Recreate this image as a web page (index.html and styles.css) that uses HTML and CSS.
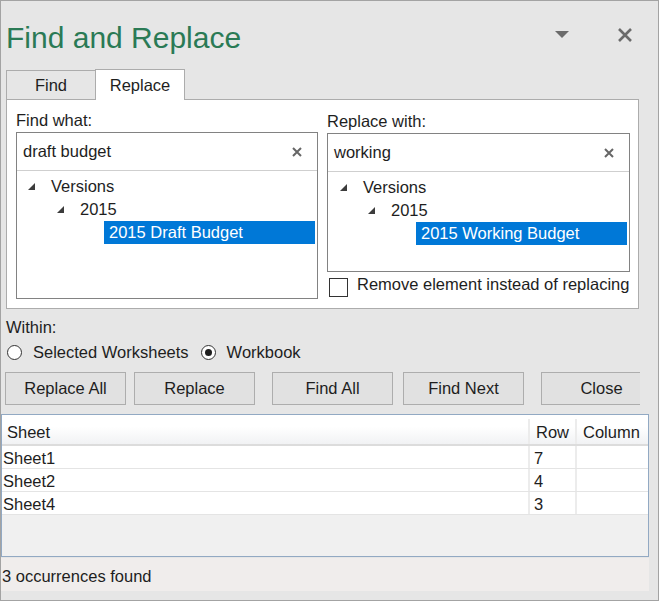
FILE: index.html
```html
<!DOCTYPE html>
<html lang="en">
<head>
  <meta charset="UTF-8">
  <title>Find and Replace</title>
  <link rel="stylesheet" href="styles.css">
</head>
<body>
  <div class="pane">
    <header class="titlebar">
      <h1 class="title">Find and Replace</h1>
      <div class="title-actions">
        <svg class="menu-arrow" width="14" height="8" viewBox="0 0 14 8"><polygon points="0,0 14,0 7,7" fill="#6b6b6b"/></svg>
        <svg class="close-x" width="16" height="16" viewBox="0 0 16 16"><path d="M2 2 L14 14 M14 2 L2 14" stroke="#6b6b6b" stroke-width="2.6"/></svg>
      </div>
    </header>

    <div class="tabs">
      <div class="tab">Find</div>
      <div class="tab active">Replace</div>
    </div>

    <section class="panel">
      <div class="col col-find">
        <div class="label">Find what:</div>
        <div class="box box-find">
          <div class="search">
            <span>draft budget</span>
            <svg class="clear" width="10" height="10" viewBox="0 0 10 10"><path d="M1 1 L9 9 M9 1 L1 9" stroke="#666" stroke-width="2"/></svg>
          </div>
          <div class="tree">
            <div class="node lvl1"><span class="twisty"></span>Versions</div>
            <div class="node lvl2"><span class="twisty"></span>2015</div>
            <div class="node lvl3 selected">2015 Draft Budget</div>
          </div>
        </div>
      </div>

      <div class="col col-replace">
        <div class="label">Replace with:</div>
        <div class="box box-replace">
          <div class="search">
            <span>working</span>
            <svg class="clear" width="10" height="10" viewBox="0 0 10 10"><path d="M1 1 L9 9 M9 1 L1 9" stroke="#666" stroke-width="2"/></svg>
          </div>
          <div class="tree">
            <div class="node lvl1"><span class="twisty"></span>Versions</div>
            <div class="node lvl2"><span class="twisty"></span>2015</div>
            <div class="node lvl3 selected">2015 Working Budget</div>
          </div>
        </div>
        <label class="check">
          <span class="checkbox"></span>
          <span>Remove element instead of replacing</span>
        </label>
      </div>
    </section>

    <div class="within">
      <div class="label">Within:</div>
      <div class="radios">
        <span class="radio"></span><span class="radio-text">Selected Worksheets</span>
        <span class="radio checked"></span><span class="radio-text">Workbook</span>
      </div>
    </div>

    <div class="buttons">
      <button class="btn btn-replace-all">Replace All</button>
      <button class="btn btn-replace">Replace</button>
      <button class="btn btn-find-all">Find All</button>
      <button class="btn btn-find-next">Find Next</button>
      <button class="btn btn-close">Close</button>
    </div>

    <div class="results">
      <div class="grid-row grid-head">
        <div class="cell c-sheet">Sheet</div>
        <div class="cell c-row">Row</div>
        <div class="cell c-col">Column</div>
      </div>
      <div class="grid-row">
        <div class="cell c-sheet">Sheet1</div>
        <div class="cell c-row">7</div>
        <div class="cell c-col"></div>
      </div>
      <div class="grid-row">
        <div class="cell c-sheet">Sheet2</div>
        <div class="cell c-row">4</div>
        <div class="cell c-col"></div>
      </div>
      <div class="grid-row">
        <div class="cell c-sheet">Sheet4</div>
        <div class="cell c-row">3</div>
        <div class="cell c-col"></div>
      </div>
    </div>

    <div class="status">3 occurrences found</div>
  </div>
</body>
</html>
```

FILE: styles.css
```css
body {
  margin: 0;
  padding: 0;
  font-family: "Liberation Sans", Arial, sans-serif;
  font-size: 16.5px;
  color: #1e1e1e;
  background-color: #fff;
}

.pane {
  box-sizing: border-box;
  width: 659px;
  height: 601px;
  border: 1px solid #a3a3a3;
  background-color: #e6e6e6; /* dialog grey */
  overflow: hidden;
}

/* title row */
.titlebar {
  display: flex;
  height: 68px;
}

.title {
  margin: 20px 0 0 5px;
  font-size: 30px;
  font-weight: normal;
  line-height: 34px;
  color: #2a7a55; /* excel green */
}

.title-actions {
  display: flex;
  align-items: center;
  height: 16px;
  margin: 26px 25px 0 auto;
}

.menu-arrow {
  margin-right: 48px;
}

/* tabs */
.tabs {
  display: flex;
  height: 30px;
  padding-left: 5px;
}

.tab {
  box-sizing: border-box;
  height: 29px;
  margin-top: 1px;
  width: 89px;
  border-top: 1px solid #acacac;
  border-left: 1px solid #acacac;
  text-align: center;
  line-height: 28px;
}

.tab.active {
  height: 31px;
  width: 90px;
  margin-top: 0;
  margin-bottom: -1px;
  border-right: 1px solid #acacac;
  background-color: #fff;
  line-height: 30px;
  position: relative;
  z-index: 1;
}

/* main panel */
.panel {
  box-sizing: border-box;
  display: flex;
  width: 633px;
  height: 210px;
  margin-left: 5px;
  border: 1px solid #acacac;
  background-color: #fff;
}

.col-find {
  padding: 10px 0 0 9px;
}

.col-replace {
  padding: 11px 0 0 9px;
}

.label {
  line-height: 20px;
  height: 20px;
  margin-bottom: 2px;
}

.box {
  box-sizing: border-box;
  border: 1px solid #828282;
}

.box-find {
  width: 302px;
  height: 167px;
}

.box-replace {
  width: 303px;
  height: 139px;
}

.search {
  display: flex;
  align-items: center;
  justify-content: space-between;
  height: 37px;
  padding: 0 15px 0 6px;
  border-bottom: 1px solid #cfcfcf;
}

.tree {
  padding-top: 4px;
}

.node {
  display: flex;
  align-items: center;
  height: 23px;
  white-space: nowrap;
}

.twisty {
  width: 0;
  height: 0;
  border-left: 7px solid transparent;
  border-bottom: 7px solid #3c3c3c;
  margin-right: 16px;
}

.box-find .lvl1 { padding-left: 11px; }
.box-find .lvl2 { padding-left: 40px; }
.box-find .lvl3 { margin-left: 87px; }

.box-replace .lvl1 { padding-left: 12px; }
.box-replace .lvl2 { padding-left: 40px; }
.box-replace .lvl3 { margin-left: 88px; }

.node.selected {
  margin-right: 2px;
  padding-left: 5px;
  background-color: #0078d7;
  color: #fff;
}

.check {
  display: flex;
  align-items: flex-start;
  margin-top: 2px;
  margin-left: 2px;
  line-height: 20px;
}

.checkbox {
  box-sizing: border-box;
  width: 19px;
  height: 19px;
  margin-top: 4px;
  border: 1px solid #333;
  background-color: #fff;
  margin-right: 9px;
}

/* within options */
.within {
  padding-left: 5px;
  margin-top: 8px;
}

.radios {
  display: flex;
  align-items: center;
  height: 20px;
  margin-top: 5px;
}

.radio {
  box-sizing: border-box;
  width: 15px;
  height: 15px;
  border: 1px solid #333;
  border-radius: 50%;
  background-color: #fff;
  margin: 0 11px 0 1px;
  display: flex;
  align-items: center;
  justify-content: center;
}

.radio.checked::after {
  content: "";
  width: 7px;
  height: 7px;
  border-radius: 50%;
  background-color: #1e1e1e;
}

.radio-text {
  margin-right: 11px;
}

/* buttons */
.buttons {
  display: flex;
  width: 639px;
  margin-top: 10px;
  overflow: hidden;
}

.btn {
  flex: none;
  box-sizing: border-box;
  width: 121px;
  height: 33px;
  border: 1px solid #adadad;
  background-color: #e1e1e1;
  font-family: inherit;
  font-size: 16.5px;
  color: #1e1e1e;
  padding: 0;
}

.btn-replace-all { margin-left: 4px; }
.btn-replace { margin-left: 8px; }
.btn-find-all { margin-left: 17px; }
.btn-find-next { margin-left: 10px; }
.btn-close { margin-left: 17px; }

/* results grid */
.results {
  box-sizing: border-box;
  width: 648px;
  height: 143px;
  margin-top: 9px;
  border: 1px solid #92a9c3;
  background-color: #f0f0f0;
}

.grid-row {
  display: flex;
  height: 22px;
  border-bottom: 1px solid #e4e4e4;
  background-color: #fff;
  line-height: 24px;
}

.grid-head {
  height: 25px;
  padding-top: 4px;
  line-height: 27px;
  border-bottom: 2px solid #dcdcdc;
  background: linear-gradient(#fff 40%, #f1f2f4);
}

.cell {
  box-sizing: border-box;
  padding-left: 1px;
  white-space: nowrap;
}

.c-sheet { width: 526px; }

.c-row {
  width: 47px;
  padding-left: 4px;
  border-left: 2px solid #ececec;
}

.c-col {
  flex: 1;
  border-left: 2px solid #ececec;
}

.grid-head .c-sheet { padding-left: 5px; }
.grid-head .c-row { padding-left: 6px; }
.grid-head .c-col { padding-left: 6px; }

/* status bar */
.status {
  width: 647px;
  height: 33px;
  margin-top: 1px;
  padding-left: 1px;
  line-height: 37px;
  background-color: #f0edec;
}
```
